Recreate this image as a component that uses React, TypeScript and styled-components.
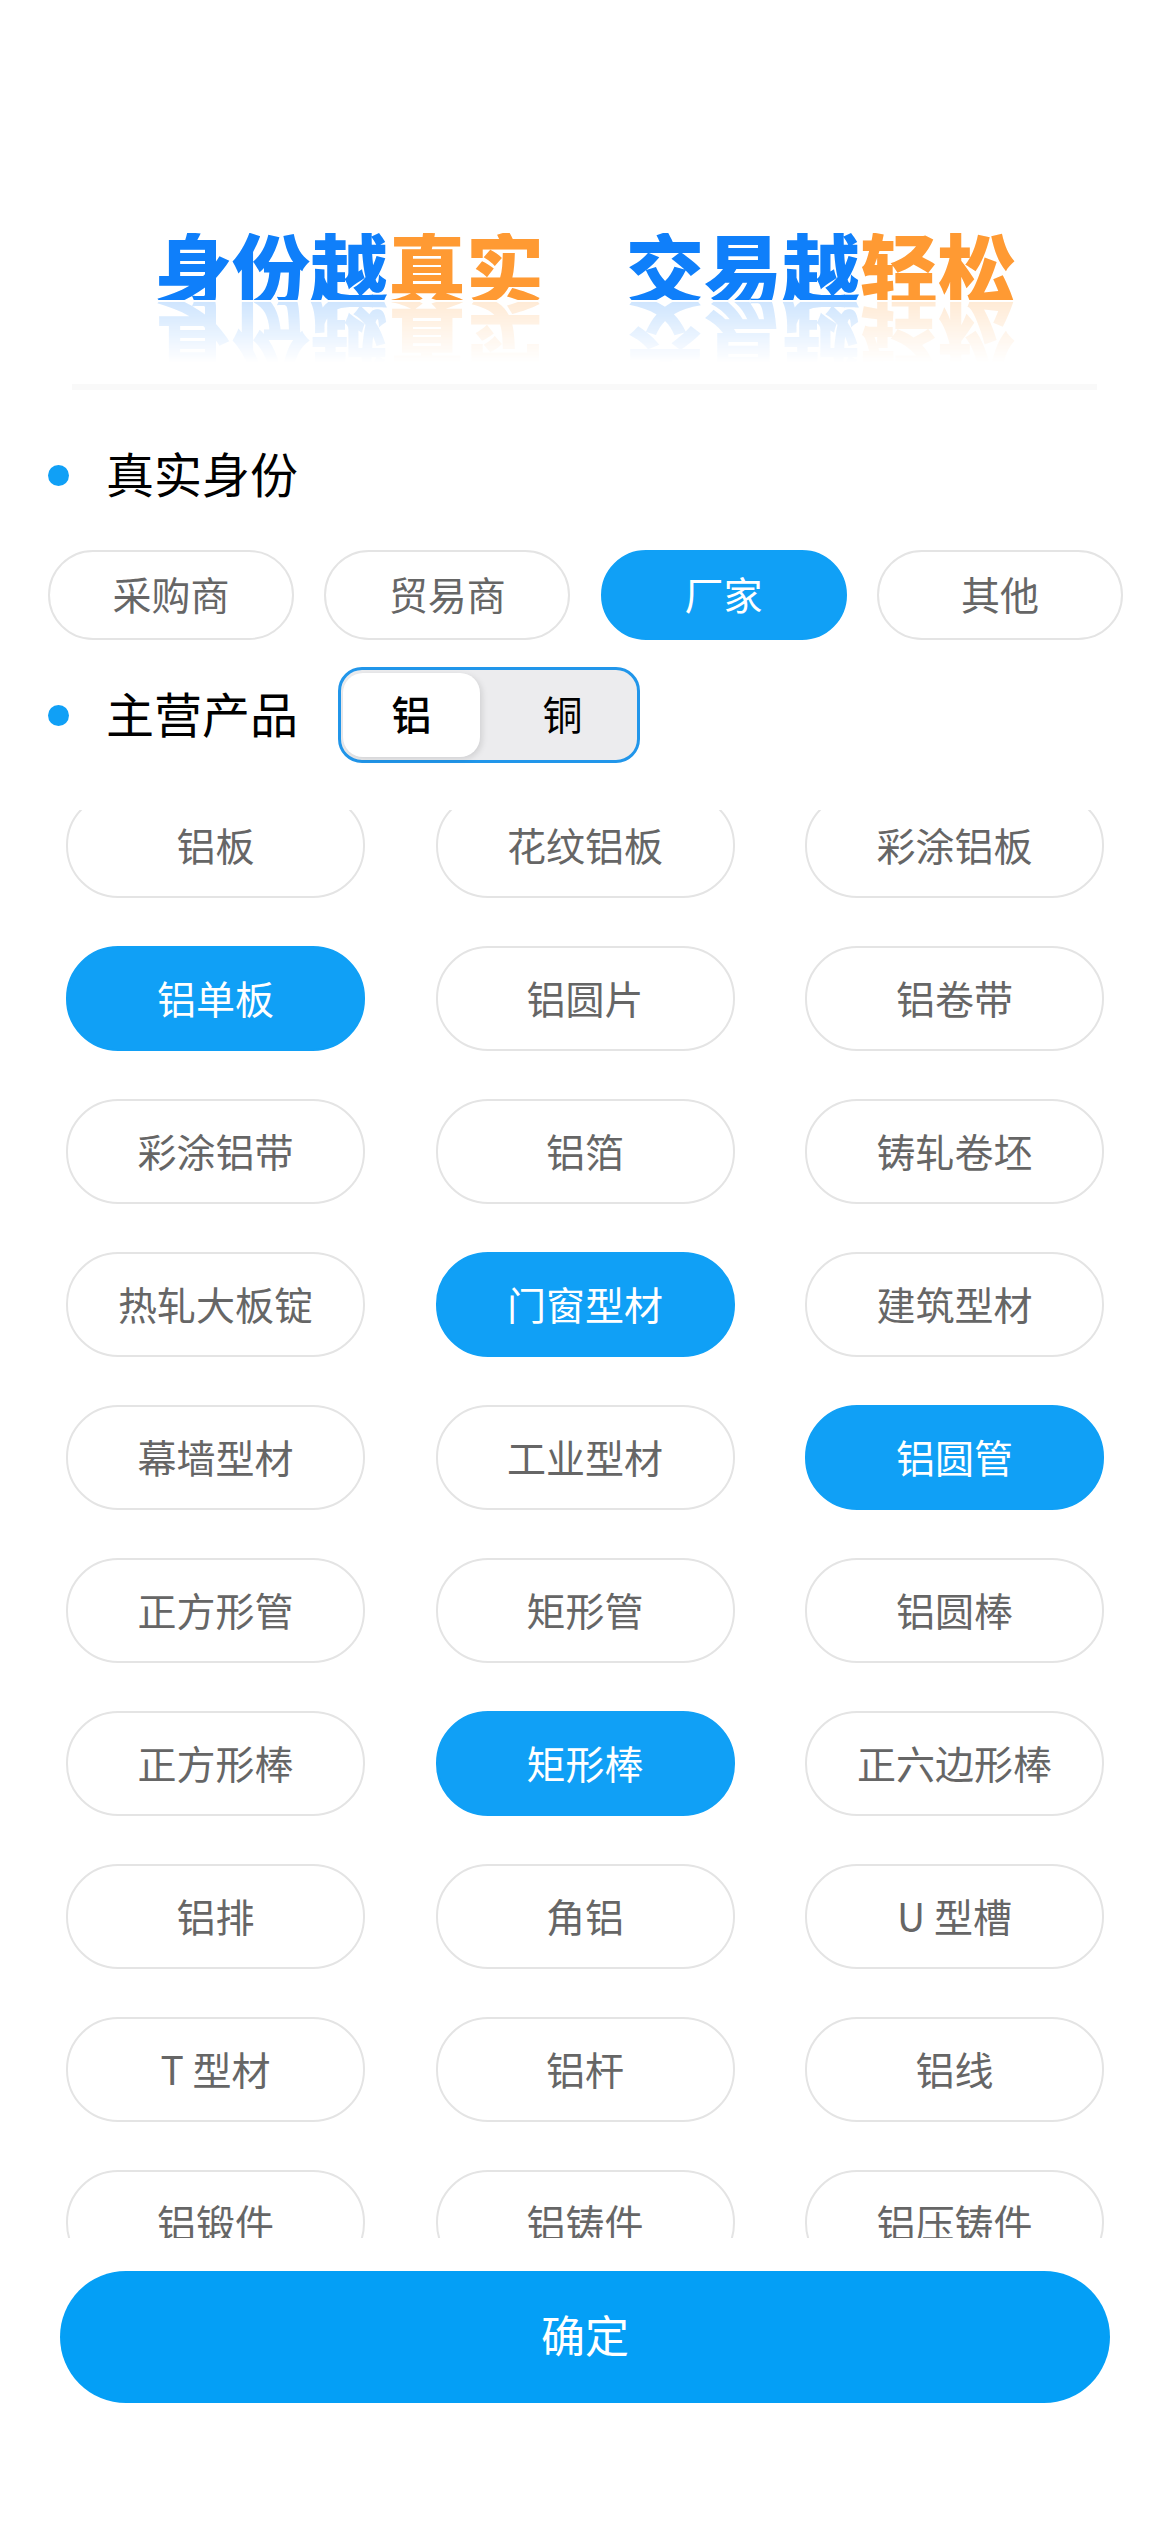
import React from "react";
import styled, { createGlobalStyle } from "styled-components";

const identities = ["采购商", "贸易商", "厂家", "其他"];

const products = [
  "铝板", "花纹铝板", "彩涂铝板",
  "铝单板", "铝圆片", "铝卷带",
  "彩涂铝带", "铝箔", "铸轧卷坯",
  "热轧大板锭", "门窗型材", "建筑型材",
  "幕墙型材", "工业型材", "铝圆管",
  "正方形管", "矩形管", "铝圆棒",
  "正方形棒", "矩形棒", "正六边形棒",
  "铝排", "角铝", "U 型槽",
  "T 型材", "铝杆", "铝线",
  "铝锻件", "铝铸件", "铝压铸件",
];

const selectedProducts = ["铝单板", "门窗型材", "铝圆管", "矩形棒"];

function App() {
  return (
    <>
      <GlobalStyle />
      <Page>
        <Banner>
          <Slogan>
            身份越<Warm>真实</Warm>
          </Slogan>
          <Slogan>
            交易越<Warm>轻松</Warm>
          </Slogan>
        </Banner>
        <Divider />

        <SectionRow>
          <Dot />
          <SectionTitle>真实身份</SectionTitle>
        </SectionRow>

        <IdentityRow>
          {identities.map((item) => (
            <IdentityPill key={item} $active={item === "厂家"}>
              {item}
            </IdentityPill>
          ))}
        </IdentityRow>

        <ProductHeader>
          <Dot />
          <SectionTitle>主营产品</SectionTitle>
          <Toggle>
            <ToggleOption $active>铝</ToggleOption>
            <ToggleOption>铜</ToggleOption>
          </Toggle>
        </ProductHeader>

        <ProductScroll>
          <ProductGrid>
            {products.map((item) => (
              <ProductPill key={item} $active={selectedProducts.includes(item)}>
                {item}
              </ProductPill>
            ))}
          </ProductGrid>
        </ProductScroll>

        <ConfirmButton>确定</ConfirmButton>
      </Page>
    </>
  );
}

export default App;

const GlobalStyle = createGlobalStyle`
  html, body {
    margin: 0;
    padding: 0;
    background: #ffffff;
  }
  * {
    box-sizing: border-box;
  }
  body {
    font-family: "Noto Sans CJK SC", "Liberation Sans", sans-serif;
  }
`;

const Page = styled.div`
  width: 1170px;
  height: 2532px;
  overflow: hidden;
  background: #ffffff;
`;

const Banner = styled.div`
  display: flex;
  justify-content: center;
  gap: 82px;
  height: 300px;
  padding-top: 233px;
`;

const Slogan = styled.div`
  height: 67px;
  overflow: hidden;
  font-size: 78px;
  line-height: 67px;
  font-weight: 900;
  color: #0f7ffa;
  white-space: nowrap;
  -webkit-box-reflect: below 2px
    linear-gradient(transparent 10%, rgba(255, 255, 255, 0.2));
`;

const Warm = styled.span`
  color: #ff9a33;
`;

const Divider = styled.div`
  width: 1025px;
  height: 6px;
  margin: 84px 0 0 72px;
  background: #f9f9f9;
`;

const SectionRow = styled.div`
  display: flex;
  align-items: center;
  height: 60px;
  margin-top: 55px;
  padding-left: 48px;
`;

const Dot = styled.span`
  flex: none;
  width: 21px;
  height: 21px;
  border-radius: 50%;
  background: #10a0f6;
`;

const SectionTitle = styled.div`
  margin: 0 0 6px 37px;
  font-size: 48px;
  line-height: 60px;
  color: #000000;
  white-space: nowrap;
`;

const IdentityRow = styled.div`
  display: flex;
  gap: 30.3px;
  margin-top: 45px;
  padding-left: 48px;
`;

const IdentityPill = styled.div<{ $active?: boolean }>`
  display: flex;
  align-items: center;
  justify-content: center;
  width: 246px;
  height: 90px;
  padding-bottom: 4px;
  border-radius: 45px;
  border: 2px solid ${(p) => (p.$active ? "#10a0f6" : "#e4e4e4")};
  background: ${(p) => (p.$active ? "#10a0f6" : "#ffffff")};
  color: ${(p) => (p.$active ? "#ffffff" : "#666666")};
  font-size: 39px;
`;

const ProductHeader = styled.div`
  display: flex;
  align-items: center;
  height: 96px;
  margin-top: 27px;
  padding-left: 48px;
`;

const Toggle = styled.div`
  display: flex;
  width: 302px;
  height: 96px;
  margin-left: 40px;
  padding: 3px 2px;
  border: 3px solid #2196ea;
  border-radius: 24px;
  background: #ececee;
`;

const ToggleOption = styled.div<{ $active?: boolean }>`
  display: flex;
  align-items: center;
  justify-content: center;
  width: ${(p) => (p.$active ? "138px" : "156px")};
  padding: ${(p) => (p.$active ? "0 0 4px" : "0 0 4px 10px")};
  border-radius: 20px;
  background: ${(p) => (p.$active ? "#ffffff" : "transparent")};
  box-shadow: ${(p) => (p.$active ? "2px 2px 6px rgba(0, 0, 0, 0.12)" : "none")};
  color: #000000;
  font-size: 40px;
  font-weight: ${(p) => (p.$active ? 500 : 400)};
`;

const ProductScroll = styled.div`
  height: 1428px;
  margin-top: 47px;
  overflow: hidden;
`;

const ProductGrid = styled.div`
  display: grid;
  grid-template-columns: repeat(3, 299px);
  column-gap: 70.5px;
  row-gap: 48px;
  margin-top: -17px;
  padding-left: 66px;
`;

const ProductPill = styled.div<{ $active?: boolean }>`
  display: flex;
  align-items: center;
  justify-content: center;
  height: 105px;
  padding-bottom: 4px;
  border-radius: 52px;
  border: 2px solid ${(p) => (p.$active ? "#10a0f6" : "#e4e4e4")};
  background: ${(p) => (p.$active ? "#10a0f6" : "#ffffff")};
  color: ${(p) => (p.$active ? "#ffffff" : "#666666")};
  font-size: 39px;
`;

const ConfirmButton = styled.div`
  display: flex;
  align-items: center;
  justify-content: center;
  width: 1050px;
  height: 132px;
  margin: 33px 0 0 60px;
  padding-bottom: 6px;
  border-radius: 66px;
  background: #049ff6;
  color: #ffffff;
  font-size: 44px;
`;
